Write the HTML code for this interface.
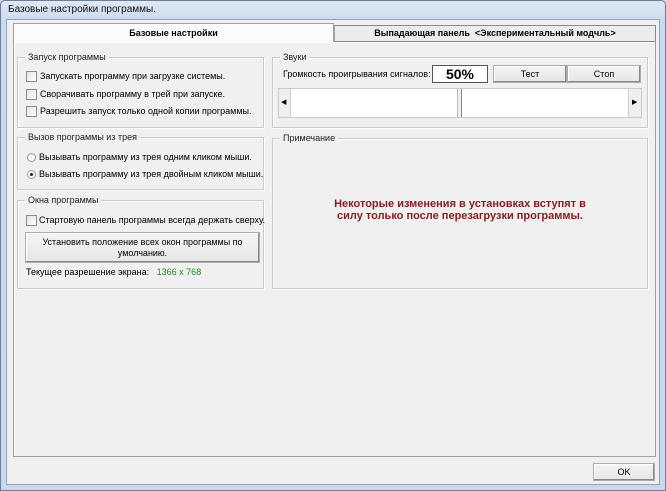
<!DOCTYPE html>
<html><head><meta charset="utf-8"><style>
*{margin:0;padding:0;box-sizing:border-box}
body{width:666px;height:491px;overflow:hidden;background:#c9d8ec;font-family:"Liberation Sans","DejaVu Sans",sans-serif;font-size:9px;color:#000;position:relative}
.a{position:absolute}
.frame{left:0;top:0;width:666px;height:491px;border:1px solid #6d7f95;border-radius:5px 5px 0 0;background:linear-gradient(#dfe9f5,#cbdaee 20px,#c9d8ec)}
.client{left:6px;top:19px;width:654px;height:466px;background:#f0f0f0;border:1px solid #8ea3bd}
.grp{position:absolute;border:1px solid #c9c9c9;box-shadow:inset 1px 1px 0 #fff,1px 1px 0 #fff}
.gt{position:absolute;top:-6px;left:7px;background:#f0f0f0;padding:0 3px;font-size:9px;color:#222;line-height:11px}
.cb{position:absolute;width:11px;height:11px;border:1px solid #8c8c8c;background:linear-gradient(135deg,#e4e4e4,#fff)}
.t{position:absolute;white-space:nowrap;line-height:11px}
.btn{position:absolute;border:1px solid #adadad;background:linear-gradient(#f4f4f4,#e6e6e6);box-shadow:inset -1px -1px 0 #888,inset 1px 1px 0 #fff;text-align:center}
.rb{position:absolute;width:9px;height:9px;border-radius:50%;border:1px solid #999;background:#fafafa}
</style></head><body>
<div class="a frame"></div>
<div class="t" style="left:8px;top:4px;font-size:10px;color:#111">Базовые настройки программы.</div>
<div class="a client"></div>
<div class="a" style="left:13px;top:41px;width:643px;height:416px;border:1px solid #a0a0a0;box-shadow:inset 1px 1px 0 #fff"></div>
<div class="a" style="left:13px;top:23px;width:321px;height:19px;background:#fbfbfb;border:1px solid #a0a0a0;border-bottom:none;box-shadow:inset 1px 1px 0 #fff"></div>
<div class="t" style="left:13px;top:28px;width:321px;text-align:center;font-weight:bold">Базовые настройки</div>
<div class="a" style="left:334px;top:25px;width:322px;height:17px;background:#ececec;border:1px solid #8a8a8a;border-left:1px solid #a0a0a0"></div>
<div class="t" style="left:334px;top:28px;width:322px;text-align:center;font-weight:bold">Выпадающая панель &nbsp;&lt;Экспериментальный модчль&gt;</div>

<div class="grp" style="left:17px;top:57px;width:247px;height:71px"><div class="gt">Запуск программы</div></div>
<div class="cb" style="left:26px;top:71px"></div><div class="t" style="left:40px;top:71px">Запускать программу при загрузке системы.</div>
<div class="cb" style="left:26px;top:89px"></div><div class="t" style="left:40px;top:89px">Сворачивать программу в трей при запуске.</div>
<div class="cb" style="left:26px;top:106px"></div><div class="t" style="left:40px;top:106px">Разрешить запуск только одной копии программы.</div>

<div class="grp" style="left:272px;top:57px;width:376px;height:71px"><div class="gt">Звуки</div></div>
<div class="t" style="left:283px;top:69px;font-size:9px">Громкость проигрывания сигналов:</div>
<div class="a" style="left:432px;top:65px;width:56px;height:18px;background:#fff;border:1px solid #555;text-align:center;font-weight:bold;font-size:14px;line-height:16px">50%</div>
<div class="btn" style="left:493px;top:65px;width:74px;height:18px;line-height:16px">Тест</div>
<div class="btn" style="left:567px;top:65px;width:74px;height:18px;line-height:16px">Стоп</div>
<div class="a" style="left:278px;top:88px;width:364px;height:30px;background:#f0f0f0;border:1px solid #c8c8c8"></div>
<div class="t" style="left:281px;top:97px;font-size:7px">◀</div>
<div class="t" style="left:632px;top:97px;font-size:7px">▶</div>
<div class="a" style="left:290px;top:89px;width:168px;height:28px;background:#fff;border-left:1px solid #ccc;border-right:1px solid #bbb"></div>
<div class="a" style="left:461px;top:89px;width:168px;height:28px;background:#fff;border-left:1px solid #888;border-right:1px solid #ccc"></div>

<div class="grp" style="left:17px;top:137px;width:247px;height:53px"><div class="gt">Вызов программы из трея</div></div>
<div class="rb" style="left:27px;top:153px"></div><div class="t" style="left:39px;top:152px">Вызывать программу из трея одним кликом мыши.</div>
<div class="rb" style="left:27px;top:170px"></div><div class="a" style="left:30px;top:173px;width:3px;height:3px;border-radius:50%;background:#222"></div>
<div class="t" style="left:39px;top:169px">Вызывать программу из трея двойным кликом мыши.</div>

<div class="grp" style="left:17px;top:200px;width:247px;height:89px"><div class="gt">Окна программы</div></div>
<div class="cb" style="left:26px;top:215px"></div><div class="t" style="left:39px;top:215px">Стартовую панель программы всегда держать сверху.</div>
<div class="btn" style="left:25px;top:232px;width:235px;height:31px;padding-top:4px;line-height:11px">Установить положение всех окон программы по<br>умолчанию.</div>
<div class="t" style="left:26px;top:267px">Текущее разрешение экрана: &nbsp;&nbsp;<span style="color:#1e8a1e">1366 x 768</span></div>

<div class="grp" style="left:272px;top:138px;width:376px;height:151px"><div class="gt">Примечание</div></div>
<div class="t" style="left:272px;top:198px;width:376px;text-align:center;font-weight:bold;font-size:11px;line-height:12px;color:#8b1c1c">Некоторые изменения в установках вступят в<br>силу только после перезагрузки программы.</div>

<div class="btn" style="left:593px;top:463px;width:62px;height:18px;line-height:16px">OK</div>
</body></html>
